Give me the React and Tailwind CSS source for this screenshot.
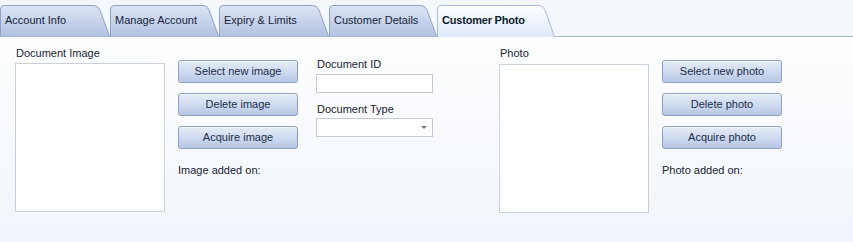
const tabs = [
  { label: "Account Info", w: 110, cls: "w-[110px]" },
  { label: "Manage Account", w: 109, cls: "w-[109px]" },
  { label: "Expiry & Limits", w: 110, cls: "w-[110px]" },
  { label: "Customer Details", w: 108, cls: "w-[108px]" },
  { label: "Customer Photo", w: 118, cls: "w-[118px]", active: true },
];

function Tab({ label, w, cls, active }) {
  const h = active ? 32 : 31;
  const d = `M0.5 ${h} L0.5 4 Q0.5 0.5 4 0.5 L${w - 16} 0.5 Q${w - 12} 0.5 ${w - 10} 5 L${w - 0.5} ${h}`;
  return (
    <div className={`relative shrink-0 ${cls} ${active ? "h-[32px] -mb-px" : "h-[31px]"}`}>
      <svg className="absolute inset-0" width={w} height={h} viewBox={`0 0 ${w} ${h}`}>
        <defs>
          <linearGradient id={active ? "tabOn" : "tabOff"} x1="0" y1="0" x2="0" y2="1">
            <stop offset="0" stopColor={active ? "#ffffff" : "#dde5f4"} />
            <stop offset="1" stopColor={active ? "#dde9f9" : "#b2c2e3"} />
          </linearGradient>
        </defs>
        <path d={d} fill={`url(#${active ? "tabOn" : "tabOff"})`} stroke={active ? "#a6bde2" : "#8fa2c6"} strokeWidth="1" />
      </svg>
      <span
        className={`relative block pl-[5px] pt-[9px] text-[11px] leading-[13px] whitespace-nowrap ${
          active ? "font-bold text-[#0f1b2e] tracking-[-0.2px]" : "text-[#16243a]"
        }`}
      >
        {label}
      </span>
    </div>
  );
}

function ActionButton({ children }) {
  return (
    <button
      type="button"
      className="h-[23px] w-[120px] rounded-[3px] border border-[#8ca1c5] bg-gradient-to-b from-[#e6edf8] to-[#b7c7e4] text-[11px] text-[#1b2e4d] shadow-[inset_0_1px_0_#f4f7fc]"
    >
      {children}
    </button>
  );
}

function ImageBox({ label, offset }) {
  return (
    <div className="flex flex-col w-[150px]">
      <span className="h-[16px] pl-px text-[11px] leading-[13px] text-[#1a2230]">{label}</span>
      <div className={`h-[149px] w-[150px] border border-[#c9d1dc] bg-white ${offset}`} />
    </div>
  );
}

function ButtonColumn({ noun }) {
  return (
    <div className="flex flex-col gap-[10px] pt-[14px]">
      <ActionButton>Select new {noun}</ActionButton>
      <ActionButton>Delete {noun}</ActionButton>
      <ActionButton>Acquire {noun}</ActionButton>
      <span className="pt-[5px] text-[11px] leading-[13px] text-[#1a2230]">
        {noun === "image" ? "Image" : "Photo"} added on:
      </span>
    </div>
  );
}

export default function App() {
  return (
    <div className="h-[242px] w-[853px] overflow-hidden bg-[#f4f7fc] font-['Liberation_Sans',Arial,sans-serif]">
      <div className="flex h-[37px] items-end border-b border-[#a9b8cc]">
        {tabs.map((tab) => (
          <Tab key={tab.label} {...tab} />
        ))}
      </div>

      <div className="flex h-[205px] bg-gradient-to-b from-[#fdfeff] to-[#f1f5fb] pl-[15px] pt-[10px]">
        <ImageBox label="Document Image" offset="" />
        <div className="ml-[13px] -mt-px">
          <ButtonColumn noun="image" />
        </div>

        <div className="ml-[18px] flex w-[117px] flex-col pt-[11px]">
          <span className="pl-px text-[11px] leading-[13px] text-[#1a2230]">Document ID</span>
          <div className="mt-[3px] h-[19px] border border-[#c3cad5] bg-white" />
          <span className="mt-[10px] pl-px text-[11px] leading-[13px] text-[#1a2230]">Document Type</span>
          <div className="mt-[2px] flex h-[19px] items-center justify-end border border-[#c3cad5] bg-white pr-[5px]">
            <svg width="6" height="3" viewBox="0 0 6 3">
              <path d="M0 0 L6 0 L3 3 Z" fill="#6f7a8a" />
            </svg>
          </div>
        </div>

        <div className="ml-[66px]">
          <ImageBox label="Photo" offset="mt-px" />
        </div>
        <div className="ml-[13px] -mt-px">
          <ButtonColumn noun="photo" />
        </div>
      </div>
    </div>
  );
}
